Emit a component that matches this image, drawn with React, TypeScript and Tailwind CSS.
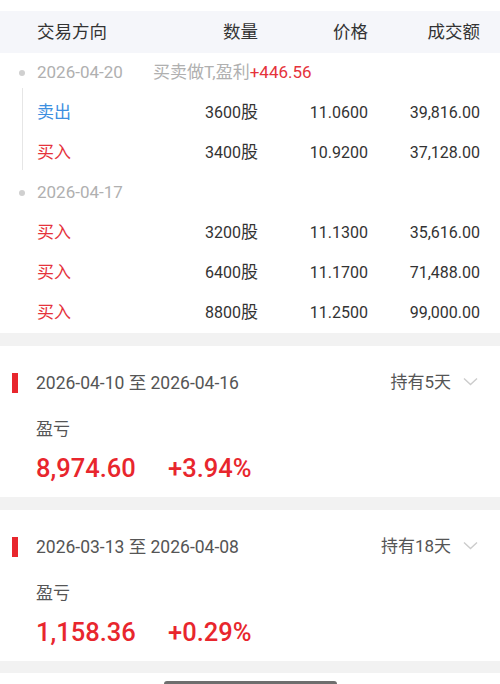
import React from 'react';

const font = { fontFamily: 'Roboto, "Noto Sans CJK SC", sans-serif' };

type Trade = { side: '买入' | '卖出'; qty: string; price: string; amount: string };

const groups: { date: string; note?: string; profit?: string; trades: Trade[] }[] = [
    {
        date: '2026-04-20',
        note: '买卖做T,盈利',
        profit: '+446.56',
        trades: [
            { side: '卖出', qty: '3600', price: '11.0600', amount: '39,816.00' },
            { side: '买入', qty: '3400', price: '10.9200', amount: '37,128.00' },
        ],
    },
    {
        date: '2026-04-17',
        trades: [
            { side: '买入', qty: '3200', price: '11.1300', amount: '35,616.00' },
            { side: '买入', qty: '6400', price: '11.1700', amount: '71,488.00' },
            { side: '买入', qty: '8800', price: '11.2500', amount: '99,000.00' },
        ],
    },
];

const holdings = [
    { range: '2026-04-10 至 2026-04-16', days: '持有5天', pnl: '8,974.60', pct: '+3.94%' },
    { range: '2026-03-13 至 2026-04-08', days: '持有18天', pnl: '1,158.36', pct: '+0.29%' },
];

const cols = 'grid grid-cols-[1fr_110px_110px_112px] pl-[37px] pr-[20px] items-center';

const Chevron = () => (
    <svg width="15" height="9" viewBox="0 0 15 9" fill="none">
        <path d="M1 1.5L7.5 7.5L14 1.5" stroke="#cccccc" strokeWidth="1.4" />
    </svg>
);

export default function App() {
    return (
        <div className="w-[500px] h-[684px] bg-white overflow-hidden flex flex-col" style={font}>
            <div className="h-[11px]" />
            {/* Table header */}
            <div className={`${cols} h-[42px] bg-[#f5f6fa] text-[17.5px] text-[#333]`}>
                <span>交易方向</span>
                <span className="text-right">数量</span>
                <span className="text-right">价格</span>
                <span className="text-right">成交额</span>
            </div>

            {/* Trade groups */}
            {groups.map((g, gi) => {
                const last = gi === groups.length - 1;
                return (
                    <div key={g.date} className="relative">
                        {!last && (
                            <div className="absolute left-[22px] top-[35px] bottom-[3px] w-px bg-[#e6e6e6]" />
                        )}
                        <div className="relative h-[40px] flex items-center pl-[37px] text-[17px]">
                            <span className="absolute left-[19px] top-[17px] w-[6px] h-[6px] rounded-full bg-[#d0d0d0]" />
                            <span className="w-[116px] text-[#b0b0b0]">{g.date}</span>
                            {g.note && (
                                <span className="text-[#b0b0b0]">
                                    {g.note}
                                    <span className="text-[#e5333b]">{g.profit}</span>
                                </span>
                            )}
                        </div>
                        {g.trades.map((t, i) => (
                            <div key={i} className={`${cols} h-[40px] text-[16px] text-[#333]`}>
                                <span
                                    className={
                                        t.side === '卖出'
                                            ? 'text-[17px] text-[#3d8fe0]'
                                            : 'text-[17px] text-[#e5333b]'
                                    }
                                >
                                    {t.side}
                                </span>
                                <span className="text-right">
                                    {t.qty}
                                    <span className="text-[17px]">股</span>
                                </span>
                                <span className="text-right">{t.price}</span>
                                <span className="text-right">{t.amount}</span>
                            </div>
                        ))}
                    </div>
                );
            })}

            {/* Holding periods */}
            {holdings.map((h) => (
                <div key={h.range} className="border-t-[13px] border-[#f2f2f2]">
                    <div className="h-[151px] flex flex-col">
                        <div className="h-[74px] flex items-center pl-[12px] pr-[22px]">
                            <span className="w-[6px] h-[20px] bg-[#e8262d]" />
                            <span className="ml-[18px] text-[17.5px] text-[#555]">{h.range}</span>
                            <span className="ml-auto text-[17px] text-[#555]">{h.days}</span>
                            <span className="ml-[12px] -mt-[3px]">
                                <Chevron />
                            </span>
                        </div>
                        <div className="pl-[36px] text-[17px] text-[#555] leading-[18px]">盈亏</div>
                        <div className="pl-[36px] mt-[15px] flex text-[25.5px] font-medium text-[#e8262d] leading-[30px]">
                            <span className="w-[132px]">{h.pnl}</span>
                            <span>{h.pct}</span>
                        </div>
                    </div>
                </div>
            ))}
            <div className="h-[12px] bg-[#f2f2f2]" />
            <div className="flex-1 flex items-end justify-center">
                <div className="w-[173px] h-[3px] bg-[#6e6e6e] rounded-t-sm" />
            </div>
        </div>
    );
}
